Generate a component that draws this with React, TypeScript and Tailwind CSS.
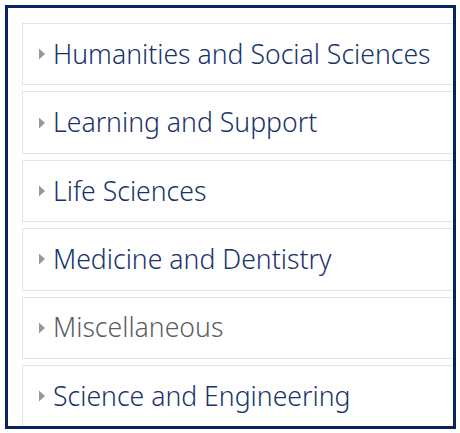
const subjects = [
  { name: 'Humanities and Social Sciences', muted: false },
  { name: 'Learning and Support', muted: false },
  { name: 'Life Sciences', muted: false },
  { name: 'Medicine and Dentistry', muted: false },
  { name: 'Miscellaneous', muted: true },
  { name: 'Science and Engineering', muted: false },
];

function Caret() {
  return (
    <svg width="6" height="12" viewBox="0 0 6 12" className="shrink-0">
      <path d="M0 0.5 L6 6 L0 11.5 Z" fill="#999999" />
    </svg>
  );
}

export default function App() {
  return (
    <div className="h-[433px] w-[460px] bg-white p-[5px]">
      <div className="h-[424px] w-[451px] overflow-hidden border-[3px] border-[#0a2260] bg-white pl-[14px] pt-[15px]">
        <div className="flex w-[460px] flex-col gap-[6px]">
          {subjects.map((subject) => (
            <div
              key={subject.name}
              className="flex h-[62.4px] items-center gap-[8px] border border-[#e3e6e9] pl-[16px]"
            >
              <Caret />
              <span
                className={`text-[26.6px] font-[350] leading-none ${subject.muted ? 'text-[#5e5e5e]' : 'text-[#17336a]'}`}
                style={{ fontFamily: '"Noto Sans", sans-serif' }}
              >
                {subject.name}
              </span>
            </div>
          ))}
        </div>
      </div>
    </div>
  );
}
